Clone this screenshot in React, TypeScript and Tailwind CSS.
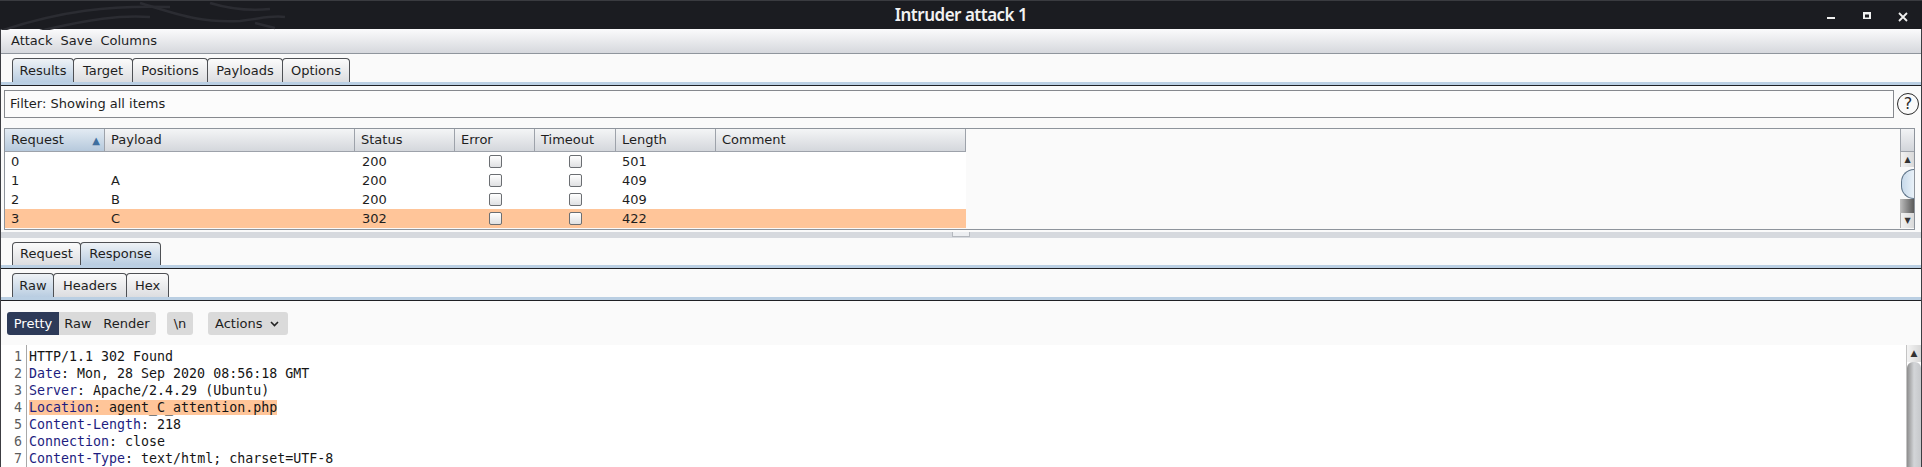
import clsx from "clsx"

const mainTabs = [
  { label: "Results", w: "w-[62px]", active: true },
  { label: "Target", w: "w-[60px]" },
  { label: "Positions", w: "w-[76px]" },
  { label: "Payloads", w: "w-[76px]" },
  { label: "Options", w: "w-[68px]" },
]

const msgTabs = [
  { label: "Request", w: "w-[69px]" },
  { label: "Response", w: "w-[81px]", active: true },
]

const viewTabs = [
  { label: "Raw", w: "w-[42px]", active: true },
  { label: "Headers", w: "w-[74px]" },
  { label: "Hex", w: "w-[43px]" },
]

const cols = [
  { name: "Request", w: "w-[100px]", sorted: true },
  { name: "Payload", w: "w-[250px]" },
  { name: "Status", w: "w-[100px]" },
  { name: "Error", w: "w-[80px]" },
  { name: "Timeout", w: "w-[81px]" },
  { name: "Length", w: "w-[100px]" },
  { name: "Comment", w: "w-[250px]" },
]

const rows = [
  { req: "0", payload: "", status: "200", length: "501" },
  { req: "1", payload: "A", status: "200", length: "409" },
  { req: "2", payload: "B", status: "200", length: "409" },
  { req: "3", payload: "C", status: "302", length: "422", selected: true },
]

const lines: { name?: string; value: string; hl?: boolean }[] = [
  { value: "HTTP/1.1 302 Found" },
  { name: "Date", value: ": Mon, 28 Sep 2020 08:56:18 GMT" },
  { name: "Server", value: ": Apache/2.4.29 (Ubuntu)" },
  { name: "Location", value: ": agent_C_attention.php", hl: true },
  { name: "Content-Length", value: ": 218" },
  { name: "Connection", value: ": close" },
  { name: "Content-Type", value: ": text/html; charset=UTF-8" },
]

type TabDef = { label: string; w: string; active?: boolean }

const TabRow = ({ tabs, h }: { tabs: TabDef[]; h: string }) => (
  <div className="flex flex-col">
    <div className="flex pl-[11px]">
      {tabs.map((t, i) => (
        <div
          key={t.label}
          className={clsx(
            "flex items-center justify-center border border-b-0 border-[#4e5054] rounded-t-[4px] text-[13px] text-[#1e1e1e]",
            h,
            t.w,
            i > 0 && "-ml-px",
            t.active
              ? "bg-linear-to-b from-[#eef2f6] to-[#b9cde1]"
              : "bg-linear-to-b from-[#fbfbfb] to-[#dcdde0]"
          )}
        >
          {t.label}
        </div>
      ))}
    </div>
    <div className="h-[3px] bg-[#bacfe3]" />
    <div className="h-px bg-[#1f2024]" />
  </div>
)

const Checkbox = () => (
  <div className="w-[13px] h-[13px] rounded-[2px] border border-[#6b6e72] bg-linear-to-b from-[#ffffff] to-[#dfe0e2]" />
)

export default function App() {
  return (
    <div
      className="w-[1922px] h-[467px] overflow-hidden flex flex-col bg-[#fafafa] text-[#1e1e1e]"
      style={{ fontFamily: '"DejaVu Sans", "Liberation Sans", sans-serif' }}
    >
      {/* title bar */}
      <div className="relative h-[29px] shrink-0 bg-[#1b1c21] border-t border-[#3a3b40] flex items-center justify-center">
        <svg className="absolute left-0 top-0" width="420" height="29" fill="none" stroke="#2b2c32" strokeWidth="2.5">
          <path d="M0 30 C60 10 110 4 170 6" />
          <path d="M40 30 C90 18 120 14 150 16" />
          <path d="M140 2 C180 14 200 22 240 20 C260 18 270 14 285 16" />
          <path d="M210 2 C230 8 250 10 270 8" />
          <path d="M255 22 L275 27" />
        </svg>
        <span
          className="text-[#f2f2f2] text-[17px] font-semibold tracking-[-0.5px]"
          style={{ fontFamily: '"Noto Sans", sans-serif' }}
        >
          Intruder attack 1
        </span>
        <svg className="absolute right-0 top-0" width="100" height="29" fill="#f0f0f0">
          <rect x="5" y="16" width="8" height="2" />
          <rect x="41" y="11" width="8" height="2.5" />
          <rect x="41" y="11" width="2" height="7" />
          <rect x="47" y="11" width="2" height="7" />
          <rect x="41" y="16.5" width="8" height="1.5" />
          <path d="M77 12 L85 20 M85 12 L77 20" stroke="#f0f0f0" strokeWidth="1.8" />
        </svg>
      </div>

      <div className="flex-1 flex flex-col border-x border-[#3c3d42]">
        {/* menu bar */}
        <div className="h-[25px] shrink-0 flex items-center gap-[8px] pl-[10px] text-[13px] bg-linear-to-b from-[#fbfbfc] to-[#d6d8dd] border-b border-[#8f959d]">
          <span>Attack</span>
          <span>Save</span>
          <span>Columns</span>
        </div>

        <div className="pt-[4px]">
          <TabRow tabs={mainTabs} h="h-[24px]" />
        </div>

        {/* filter */}
        <div className="flex items-center mt-[4px] pl-[3px]">
          <div className="w-[1890px] h-[28px] border border-[#86898e] bg-[#fcfcfc] flex items-center pl-[5px] text-[13px]">
            Filter: Showing all items
          </div>
          <div className="ml-[3px] w-[22px] h-[22px] rounded-full border-[1.5px] border-[#2a2a2a] flex items-center justify-center text-[16px] leading-none text-[#2a2a2a]">
            ?
          </div>
        </div>

        {/* results table */}
        <div className="mt-[10px] ml-[3px] w-[1911px] h-[102px] border border-[#8e949c] flex text-[13px]">
          <div className="flex-1 flex flex-col">
            <div className="flex h-[23px]">
              {cols.map((c) => (
                <div
                  key={c.name}
                  className={clsx(
                    "flex items-center justify-between pl-[6px] pr-[4px] border-r border-b border-[#9da2aa]",
                    c.w,
                    c.sorted
                      ? "bg-linear-to-b from-[#e3ebf3] to-[#b6c9dc]"
                      : "bg-linear-to-b from-[#f4f5f6] to-[#d4d7dc]"
                  )}
                >
                  <span>{c.name}</span>
                  {c.sorted && <span className="text-[#3f6f9f] text-[10px]">▲</span>}
                </div>
              ))}
            </div>
            {rows.map((r) => (
              <div key={r.req} className="flex h-[19px]">
                <div className={clsx("flex", r.selected ? "bg-[#ffc599]" : "bg-white")}>
                  <div className="w-[100px] pl-[6px] flex items-center">{r.req}</div>
                  <div className="w-[250px] pl-[6px] flex items-center">{r.payload}</div>
                  <div className="w-[100px] pl-[7px] flex items-center">{r.status}</div>
                  <div className="w-[80px] flex items-center justify-center"><Checkbox /></div>
                  <div className="w-[81px] flex items-center justify-center"><Checkbox /></div>
                  <div className="w-[100px] pl-[6px] flex items-center">{r.length}</div>
                  <div className="w-[250px]" />
                </div>
              </div>
            ))}
          </div>
          {/* scrollbar */}
          <div className="w-[14px] flex flex-col">
            <div className="h-[23px] bg-linear-to-b from-[#f2f3f5] to-[#d2d5da] border-b border-l border-[#9da2aa]" />
            <div className="h-[15px] bg-linear-to-r from-[#f3f3f3] to-[#d9d9d9] border-l border-[#b0b0b0] flex items-center justify-center text-[8px] text-[#333]">▲</div>
            <div className="h-[30px] mt-[2px] ml-[1px] rounded-l-full bg-linear-to-r from-[#c7d9ea] to-[#e9f1f8] border border-r-0 border-[#5c7287]" />
            <div className="h-[14px] bg-linear-to-r from-[#bfbfbf] to-[#5a5a5a]" />
            <div className="h-[15px] bg-linear-to-r from-[#f3f3f3] to-[#d9d9d9] border-l border-[#b0b0b0] flex items-center justify-center text-[8px] text-[#333]">▼</div>
          </div>
        </div>

        {/* splitter */}
        <div className="mt-[2px] h-[6px] bg-[#d6d9de] flex justify-center">
          <div className="w-[18px] h-[5px] bg-[#eceef1] border border-[#b4b8be] border-t-0" />
        </div>

        <div className="pt-[4px]">
          <TabRow tabs={msgTabs} h="h-[23px]" />
        </div>
        <div className="pt-[4px]">
          <TabRow tabs={viewTabs} h="h-[24px]" />
        </div>

        {/* editor toolbar */}
        <div className="mt-[11px] h-[23px] flex items-stretch pl-[6px] text-[13px]">
          <div className="flex rounded-[3px] overflow-hidden">
            <div className="w-[52px] bg-[#2d3a58] text-white flex items-center justify-center">Pretty</div>
            <div className="w-[38px] bg-[#dadada] flex items-center justify-center">Raw</div>
            <div className="w-[59px] bg-[#dadada] flex items-center justify-center">Render</div>
          </div>
          <div className="ml-[11px] bg-[#dadada] rounded-[3px] w-[26px] flex items-center justify-center">\n</div>
          <div className="ml-[15px] bg-[#dadada] rounded-[3px] w-[80px] pl-[7px] flex items-center gap-[7px]">
            <span>Actions</span>
            <svg width="9" height="6" viewBox="0 0 9 6" fill="none" stroke="#222" strokeWidth="1.6">
              <path d="M1 1 L4.5 4.5 L8 1" />
            </svg>
          </div>
        </div>

        {/* editor */}
        <div className="mt-[10px] flex-1 flex bg-white min-h-0">
          <div
            className="flex-1 flex text-[13.3px] leading-[17px] pt-[3px]"
            style={{ fontFamily: '"DejaVu Sans Mono", "Liberation Mono", monospace' }}
          >
            <div className="w-[25px] pr-[4px] text-right text-[#5c5c5c] flex flex-col">
              {lines.map((_, i) => (
                <div key={i}>{i + 1}</div>
              ))}
            </div>
            <div className="w-px bg-[#a8a8a8] -mt-[3px]" />
            <div className="pl-[2px] flex flex-col whitespace-pre">
              {lines.map((l, i) => (
                <div key={i}>
                  <span className={clsx(l.hl && "bg-[#ffc599]")}>
                    {l.name && <span className="text-[#1d1d80]">{l.name}</span>}
                    <span className="text-[#151515]">{l.value}</span>
                  </span>
                </div>
              ))}
            </div>
          </div>
          <div className="w-[15px] flex flex-col border-l border-[#c4c4c4]">
            <div className="h-[17px] bg-linear-to-r from-[#f4f4f4] to-[#d8d8d8] flex items-center justify-center text-[9px] text-[#333]">▲</div>
            <div className="flex-1 rounded-t-[6px] bg-linear-to-r from-[#8e8e8e] via-[#d3d5d8] to-[#c6c8cb]" />
          </div>
        </div>
      </div>
    </div>
  )
}
